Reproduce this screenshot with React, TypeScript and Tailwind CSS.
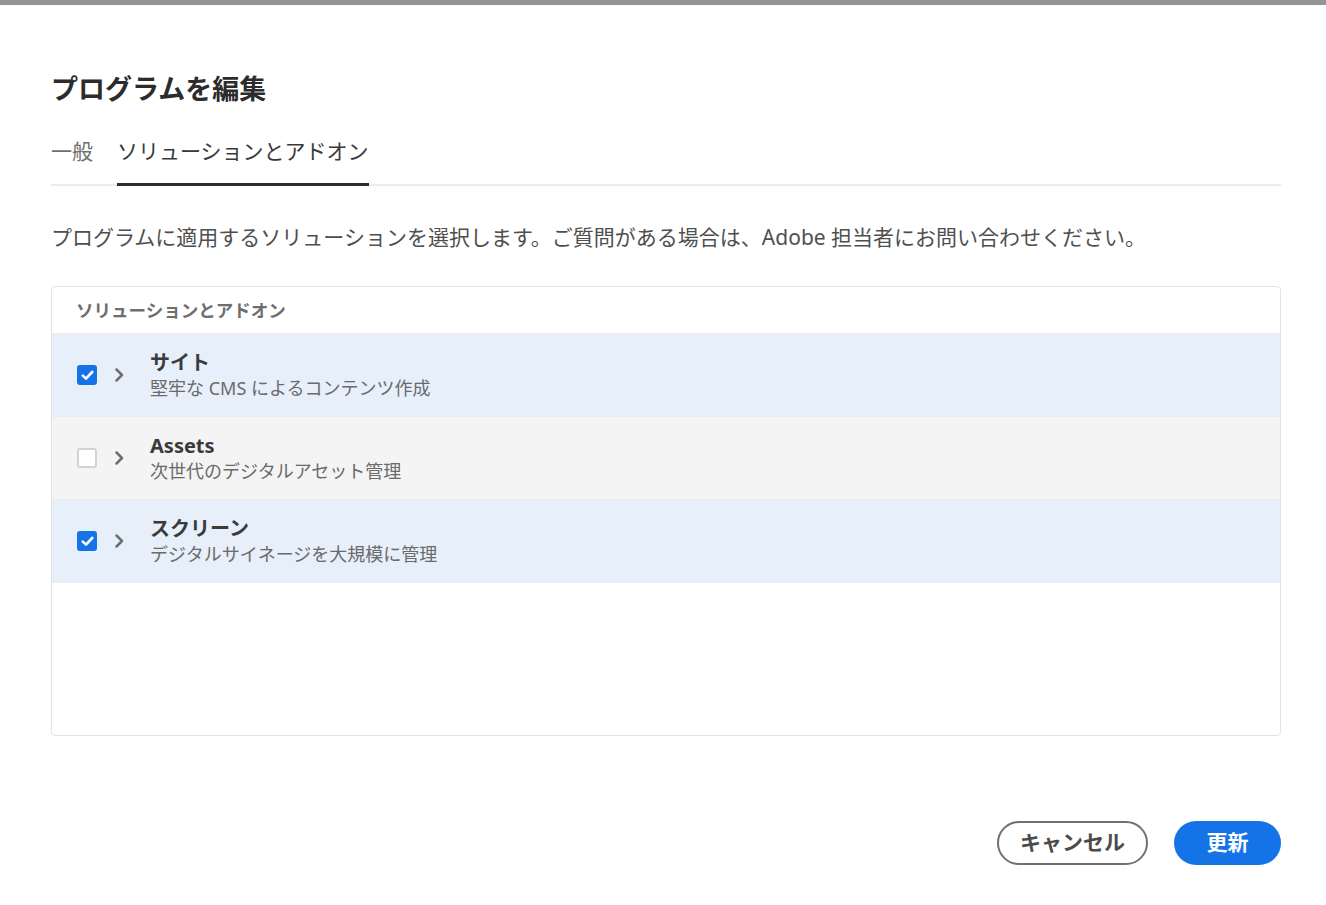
import React, { useState } from 'react';

interface Solution {
  id: string;
  title: string;
  description: string;
  checked: boolean;
}

const initialSolutions: Solution[] = [
  { id: 'sites', title: 'サイト', description: '堅牢な CMS によるコンテンツ作成', checked: true },
  { id: 'assets', title: 'Assets', description: '次世代のデジタルアセット管理', checked: false },
  { id: 'screens', title: 'スクリーン', description: 'デジタルサイネージを大規模に管理', checked: true },
];

function Chevron() {
  return (
    <svg width="12" height="16" viewBox="0 0 12 16" fill="none">
      <path d="M3.5 2.5 L9 8 L3.5 13.5" stroke="#6e6e6e" strokeWidth="2.5" strokeLinecap="round" strokeLinejoin="round" />
    </svg>
  );
}

function Checkbox({ checked, onChange }: { checked: boolean; onChange: () => void }) {
  return (
    <button
      onClick={onChange}
      className={`flex items-center justify-center w-[20px] h-[20px] rounded-[3px] ${
        checked ? 'bg-[#1473e6]' : 'border-2 border-[#d3d3d3] bg-white'
      }`}
    >
      {checked && (
        <svg width="13" height="11" viewBox="0 0 13 11" fill="none">
          <path d="M1.8 5.6 L5 8.6 L11.2 2" stroke="white" strokeWidth="2.6" strokeLinecap="round" strokeLinejoin="round" />
        </svg>
      )}
    </button>
  );
}

export default function App() {
  const [solutions, setSolutions] = useState(initialSolutions);

  const toggle = (id: string) => {
    setSolutions((prev) => prev.map((s) => (s.id === id ? { ...s, checked: !s.checked } : s)));
  };

  return (
    <div
      className="min-h-[905px] bg-white text-[#4b4b4b]"
      style={{ fontFamily: '"Noto Sans", "Noto Sans CJK JP", sans-serif' }}
    >
      <div className="h-[5px] bg-[#959595]" />

      <div className="pl-[51px] pr-[45px]">
        {/* Title */}
        <h1 className="mt-[67px] text-[27px] leading-[34px] font-bold text-[#2c2c2c]">プログラムを編集</h1>

        {/* Tabs */}
        <div className="mt-[30px] flex gap-[24px] border-b-2 border-[#ececec]">
          <div className="pb-[18px] text-[21px] leading-[30px] text-[#6e6e6e]">一般</div>
          <div className="-mb-[2px] pb-[16px] border-b-[3px] border-[#2c2c2c] text-[21px] leading-[30px] text-[#3a3a3a]">
            ソリューションとアドオン
          </div>
        </div>

        {/* Description */}
        <p className="mt-[37px] text-[21px] leading-[28px] text-[#4f4f4f]">
          プログラムに適用するソリューションを選択します。ご質問がある場合は、Adobe 担当者にお問い合わせください。
        </p>

        {/* Table */}
        <div className="mt-[35px] h-[450px] rounded-[4px] border border-[#e3e3e3] overflow-hidden">
          <div className="h-[47px] flex items-center pl-[24px] text-[17.5px] font-semibold text-[#6e6e6e] border-b border-[#ececec]">
            ソリューションとアドオン
          </div>
          {solutions.map((s) => (
            <div
              key={s.id}
              className={`h-[83px] flex items-center border-b border-[#ececec] ${
                s.checked ? 'bg-[#e6effa]' : 'bg-[#f4f4f4]'
              }`}
            >
              <div className="pl-[25px] flex items-center">
                <Checkbox checked={s.checked} onChange={() => toggle(s.id)} />
              </div>
              <div className="ml-[16px] flex items-center">
                <Chevron />
              </div>
              <div className="ml-[25px] flex flex-col">
                <span className="text-[20px] leading-[25px] font-bold text-[#3a3a3a]">{s.title}</span>
                <span className="text-[18px] leading-[26px] text-[#6a6a6a]">{s.description}</span>
              </div>
            </div>
          ))}
        </div>

        {/* Buttons */}
        <div className="mt-[85px] flex justify-end gap-[26px]">
          <button className="h-[44px] w-[151px] rounded-full border-2 border-[#707070] text-[21px] font-bold text-[#4b4b4b]">
            キャンセル
          </button>
          <button className="h-[44px] w-[107px] rounded-full bg-[#1473e6] text-[21px] font-bold text-white">
            更新
          </button>
        </div>
      </div>
    </div>
  );
}
